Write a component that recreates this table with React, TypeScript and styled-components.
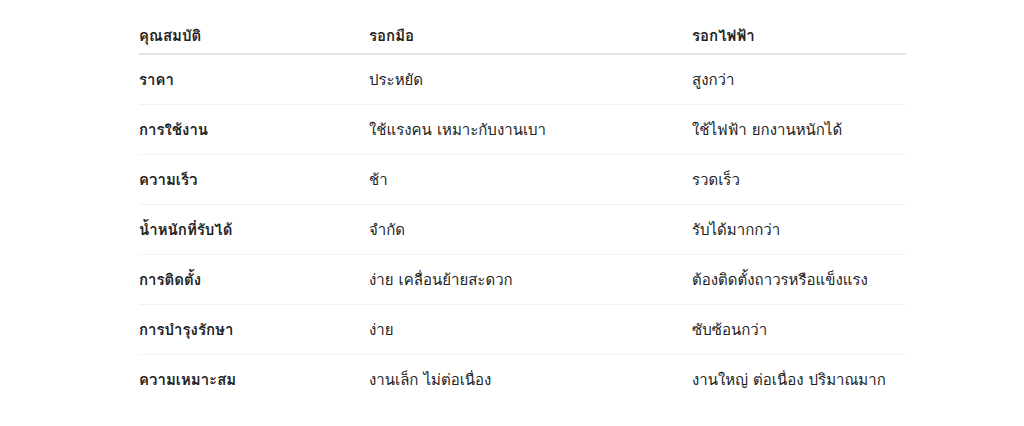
import React from 'react';
import styled, { createGlobalStyle } from 'styled-components';

const GlobalStyle = createGlobalStyle`
  html, body {
    margin: 0;
    padding: 0;
    background: #ffffff;
  }
  body {
    font-family: Loma, "Noto Sans Thai", sans-serif;
    color: #222222;
  }
`;

const Wrapper = styled.div`
  padding: 19px 118px 0 139px;
`;

const Table = styled.table`
  width: 767px;
  border-collapse: collapse;
  font-size: 15px;
  line-height: 20px;
`;

const HeadCell = styled.th<{ $width: number }>`
  width: ${(p) => p.$width}px;
  text-align: left;
  font-weight: 700;
  padding: 7px 0;
  border-bottom: 2px solid #e4e4e4;
`;

const Row = styled.tr`
  border-bottom: 1px solid #f2f2f2;

  &:last-child {
    border-bottom: none;
  }
`;

const Cell = styled.td<{ $bold?: boolean }>`
  padding: 15px 0 14px;
  font-weight: ${(p) => (p.$bold ? 700 : 400)};
  vertical-align: middle;
`;

const rows = [
  ['ราคา', 'ประหยัด', 'สูงกว่า'],
  ['การใช้งาน', 'ใช้แรงคน เหมาะกับงานเบา', 'ใช้ไฟฟ้า ยกงานหนักได้'],
  ['ความเร็ว', 'ช้า', 'รวดเร็ว'],
  ['น้ำหนักที่รับได้', 'จำกัด', 'รับได้มากกว่า'],
  ['การติดตั้ง', 'ง่าย เคลื่อนย้ายสะดวก', 'ต้องติดตั้งถาวรหรือแข็งแรง'],
  ['การบำรุงรักษา', 'ง่าย', 'ซับซ้อนกว่า'],
  ['ความเหมาะสม', 'งานเล็ก ไม่ต่อเนื่อง', 'งานใหญ่ ต่อเนื่อง ปริมาณมาก'],
];

const App = () => {
  return (
    <>
      <GlobalStyle />
      <Wrapper>
        <Table>
          <thead>
            <tr>
              <HeadCell $width={230}>คุณสมบัติ</HeadCell>
              <HeadCell $width={323}>รอกมือ</HeadCell>
              <HeadCell $width={214}>รอกไฟฟ้า</HeadCell>
            </tr>
          </thead>
          <tbody>
            {rows.map((r) => (
              <Row key={r[0]}>
                <Cell $bold>{r[0]}</Cell>
                <Cell>{r[1]}</Cell>
                <Cell>{r[2]}</Cell>
              </Row>
            ))}
          </tbody>
        </Table>
      </Wrapper>
    </>
  );
};

export default App;
